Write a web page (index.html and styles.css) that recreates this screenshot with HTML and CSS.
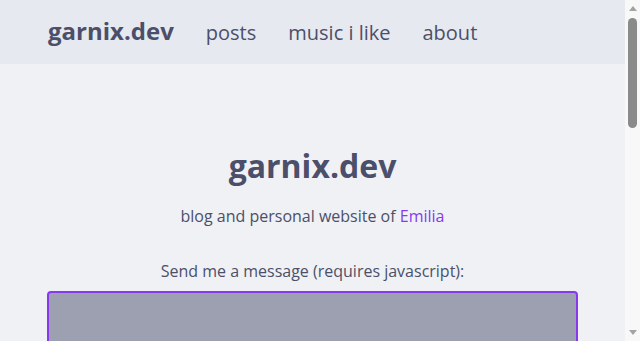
FILE: index.html
```html
<!DOCTYPE html>
<html lang="en">
<head>
    <meta charset="UTF-8">
    <meta name="viewport" content="width=device-width, initial-scale=1.0">
    <title>garnix.dev</title>
    <link rel="stylesheet" href="styles.css">
</head>
<body>
    <header class="topbar">
        <nav class="nav">
            <a class="brand" href="#">garnix.dev</a>
            <a href="#">posts</a>
            <a href="#">music i like</a>
            <a href="#">about</a>
        </nav>
    </header>

    <main class="content">
        <h1>garnix.dev</h1>
        <p class="tagline">blog and personal website of <a href="#">Emilia</a></p>

        <!-- contact form -->
        <form class="contact">
            <label for="msg">Send me a message (requires javascript):</label>
            <textarea id="msg" name="msg" rows="8"></textarea>
            <button type="submit">send</button>
        </form>
    </main>

    <!-- window scrollbar -->
    <div class="scrollbar" aria-hidden="true">
        <span class="arrow up"></span>
        <span class="thumb"></span>
        <span class="arrow down"></span>
    </div>
</body>
</html>
```

FILE: styles.css
```css
html, body {
    margin: 0;
    padding: 0;
}
body {
    font-family: "Open Sans", sans-serif;
    background-color: #eff1f5;
    color: #4c4f69;
    min-height: 963px;
    padding-right: 15px;
}
a {
    color: #8839ef;
    text-decoration: none;
}
.topbar {
    background-color: #e6e9ef;
    height: 64px;
    display: flex;
    align-items: center;
    padding: 0 48px 4px;
    box-sizing: border-box;
}
.nav {
    display: flex;
    align-items: baseline;
    gap: 32px;
}
.nav a {
    color: #4c4f69;
    font-size: 20px;
}
.nav .brand {
    font-weight: bold;
    font-size: 24px;
}
.content {
    padding: 0 47px;
    text-align: center;
}
h1 {
    font-size: 32px;
    margin: 76px 0 0;
    line-height: 52px;
}
.tagline {
    margin: 13px 0 0;
    font-size: 16px;
}
.contact {
    margin-top: 33px;
    display: flex;
    flex-direction: column;
}
.contact label {
    font-size: 16px;
    margin-bottom: 9px;
}
textarea {
    background-color: #9ca0b0;
    border: 2px solid #8839ef;
    border-radius: 4px;
    height: 160px;
    outline: none;
}
button {
    align-self: center;
    margin: 16px 0 40px;
    background-color: #8839ef;
    color: #eff1f5;
    border: none;
    padding: 8px 20px;
    font-size: 16px;
    border-radius: 4px;
}
.scrollbar {
    position: fixed;
    top: 0;
    right: 0;
    bottom: 0;
    width: 15px;
    background-color: #f8f8f8;
    display: flex;
    flex-direction: column;
    align-items: center;
    padding: 6px 0;
    box-sizing: border-box;
}
.arrow {
    width: 0;
    height: 0;
    border-left: 4px solid transparent;
    border-right: 4px solid transparent;
}
.arrow.up {
    border-bottom: 5px solid #a3a3a3;
}
.arrow.down {
    margin-top: auto;
    border-top: 5px solid #a3a3a3;
}
.thumb {
    width: 9px;
    height: 110px;
    margin-top: 7px;
    background-color: #8a8a8a;
    border-radius: 5px;
}
```
